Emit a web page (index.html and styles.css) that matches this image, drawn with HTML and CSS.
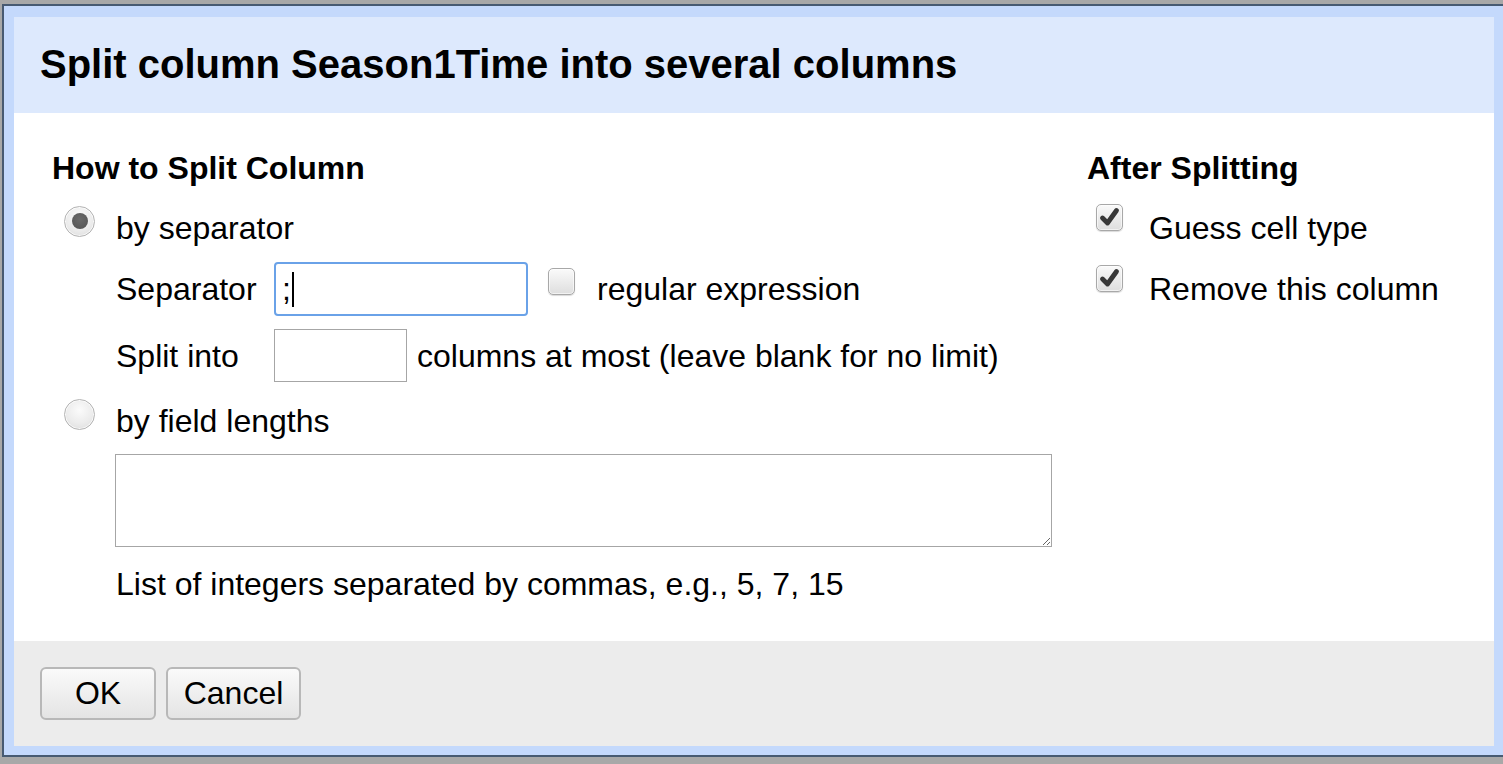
FILE: index.html
```html
<!DOCTYPE html>
<html lang="en">
<head>
<meta charset="utf-8">
<title>Split column</title>
<link rel="stylesheet" href="styles.css">
</head>
<body>
<div class="dialog">
  <div class="dialog-inner">
    <header class="dlg-header">
      <h1>Split column Season1Time into several columns</h1>
    </header>
    <div class="dlg-body">
      <section class="col-left">
        <h2>How to Split Column</h2>
        <div class="row row-radio r1"><span class="radio checked"></span><span>by separator</span></div>
        <div class="row sub r2">
          <span class="lbl">Separator</span>
          <div class="field field-focus"><span class="val">;</span><span class="caret"></span></div>
          <span class="checkbox cb-regex"></span>
          <span>regular expression</span>
        </div>
        <div class="row sub r3">
          <span class="lbl">Split into</span>
          <div class="field field-small"></div>
          <span>columns at most (leave blank for no limit)</span>
        </div>
        <div class="row row-radio r4"><span class="radio radio-2"></span><span>by field lengths</span></div>
        <textarea class="lengths"></textarea>
        <p class="help">List of integers separated by commas, e.g., 5, 7, 15</p>
      </section>
      <section class="col-right">
        <h2>After Splitting</h2>
        <div class="row r1 check-row">
          <span class="checkbox checked"><svg viewBox="0 0 27 27" width="27" height="27"><path d="M6.5 14 L11.5 19 L20.5 6.5" fill="none" stroke="#383838" stroke-width="4.8" stroke-linecap="round" stroke-linejoin="round"/></svg></span>
          <span>Guess cell type</span>
        </div>
        <div class="row r2 check-row">
          <span class="checkbox checked"><svg viewBox="0 0 27 27" width="27" height="27"><path d="M6.5 14 L11.5 19 L20.5 6.5" fill="none" stroke="#383838" stroke-width="4.8" stroke-linecap="round" stroke-linejoin="round"/></svg></span>
          <span>Remove this column</span>
        </div>
      </section>
    </div>
    <footer class="dlg-footer">
      <button class="btn btn-ok">OK</button>
      <button class="btn btn-cancel">Cancel</button>
    </footer>
  </div>
</div>
</body>
</html>
```

FILE: styles.css
```css
html, body {
  margin: 0;
  padding: 0;
  overflow: hidden;
  background: #a8a8a8;
  font-family: "Liberation Sans", Arial, sans-serif;
  color: #000;
}

.dialog {
  margin: 4px 0 0 2px;
  width: 1500px;
  border: 2px solid #475a72;
  border-right: none;
  background: #c4d9fc;
  padding: 11px 10px 9px 10px;
}

.dialog-inner {
  width: 1480px;
  background: #fff;
}

.dlg-header {
  height: 96px;
  box-sizing: border-box;
  background: #dde9fd;
  padding: 25px 26px 0 26px;
}

.dlg-header h1 {
  margin: 0;
  font-size: 40px;
  line-height: 44px;
  font-weight: bold;
}

.dlg-body {
  height: 528px;
  box-sizing: border-box;
  padding: 37px 0 0 38px;
  display: flex;
  font-size: 32px;
}

.col-left {
  width: 1035px;
  display: flex;
  flex-direction: column;
  align-items: flex-start;
}

.col-right {
  flex: 1;
  display: flex;
  flex-direction: column;
  align-items: flex-start;
}

h2 {
  margin: 0;
  font-size: 32px;
  line-height: 36px;
  font-weight: bold;
}

.row {
  display: flex;
  align-items: center;
  line-height: 36px;
  white-space: nowrap;
}

.r1 { margin-top: 24px; height: 36px; }
.r2 { margin-top: 16px; height: 54px; }
.r3 { margin-top: 13px; height: 53px; }
.r4 { margin-top: 21px; height: 36px; }

.row-radio { margin-left: 12px; }
.row-radio .radio { margin-right: 21px; margin-bottom: 14px; }
.row-radio .radio-2 { margin-bottom: 13px; }

.sub { margin-left: 64px; }
.lbl { width: 158px; }

.radio {
  width: 31px;
  height: 31px;
  box-sizing: border-box;
  border-radius: 50%;
  border: 1px solid #b4b4b4;
  background: radial-gradient(circle at 50% 35%, #fbfbfb 0%, #ececec 55%, #d9d9d9 100%);
  box-shadow: inset 0 0 0 1px rgba(255,255,255,0.7);
  display: flex;
  align-items: center;
  justify-content: center;
  flex: none;
}

.radio.checked::after {
  content: "";
  width: 16px;
  height: 16px;
  border-radius: 50%;
  background: radial-gradient(circle at 50% 40%, #6a6a6a 0%, #5a5a5a 70%, #4a4a4a 100%);
}

.field {
  box-sizing: border-box;
  background: #fff;
  display: flex;
  align-items: center;
}

.field-focus {
  width: 254px;
  height: 54px;
  border: 2px solid #6aa2e8;
  border-radius: 4px;
  padding-left: 6px;
}

.field-focus .val {
  font-size: 32px;
  line-height: 36px;
}

.caret {
  width: 2px;
  height: 35px;
  background: #000;
  margin-left: 1px;
}

.field-small {
  width: 133px;
  height: 53px;
  border: 1px solid #a6a6a6;
  margin-right: 10px;
}

.checkbox {
  width: 27px;
  height: 27px;
  box-sizing: border-box;
  border: 1px solid #a8a8a8;
  border-radius: 5px;
  background: linear-gradient(#fafafa, #dedede);
  box-shadow: 0 1px 1px rgba(0,0,0,0.15), inset 0 0 0 1px rgba(255,255,255,0.6);
  flex: none;
  display: flex;
  align-items: center;
  justify-content: center;
  overflow: hidden;
}

.checkbox svg { display: block; flex: none; }

.cb-regex {
  margin-left: 20px;
  margin-right: 22px;
  margin-bottom: 16px;
}

.check-row { margin-left: 9px; }
.check-row .checkbox {
  margin-right: 26px;
  margin-bottom: 21px;
}

.lengths {
  margin: 15px 0 0 63px;
  width: 937px;
  height: 93px;
  box-sizing: border-box;
  border: 1px solid #a6a6a6;
  font-family: inherit;
  font-size: 16px;
  padding: 2px;
  display: block;
}

.help {
  margin: 19px 0 0 64px;
  line-height: 36px;
  font-size: 32px;
}

.dlg-footer {
  height: 105px;
  box-sizing: border-box;
  background: #ececec;
  padding: 26px 0 0 26px;
  display: flex;
  align-items: flex-start;
  gap: 10px;
}

.btn {
  height: 53px;
  box-sizing: border-box;
  border: 2px solid #b8b8b8;
  border-radius: 6px;
  background: linear-gradient(#fafafa, #e4e4e4);
  font-family: "Liberation Sans", Arial, sans-serif;
  font-size: 32px;
  color: #000;
  padding: 0;
  margin: 0;
}

.btn-ok { width: 116px; }
.btn-cancel { width: 135px; }
```
